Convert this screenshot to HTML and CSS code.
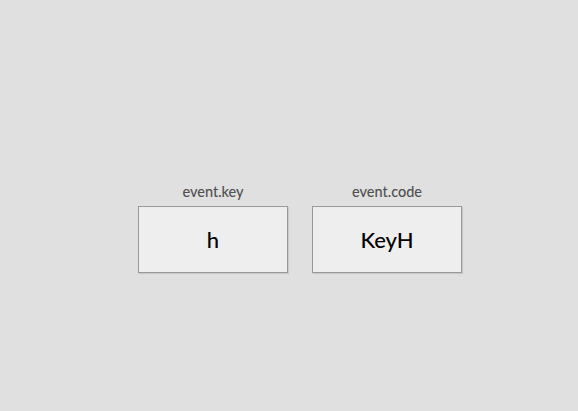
FILE: index.html
```html
<!DOCTYPE html>
<html>
<head>
<meta charset="utf-8">
<link rel="stylesheet" href="styles.css">
</head>
<body>
<main class="page">
  <div class="cards">
    <div class="card">
      <div class="label">event.key</div>
      <div class="box">h</div>
    </div>
    <div class="card">
      <div class="label">event.code</div>
      <div class="box">KeyH</div>
    </div>
  </div>
</main>
</body>
</html>
```
FILE: styles.css
```css
html, body {
  margin: 0;
  padding: 0;
  background: #e0e0e0;
  font-family: Lato, "Noto Sans", sans-serif;
}
.page {
  width: 578px;
  height: 411px;
  box-sizing: border-box;
  padding: 182px 0 0 138px;
}
.cards {
  display: flex;
  gap: 24px;
}
.card {
  display: flex;
  flex-direction: column;
  align-items: center;
  gap: 5px;
}
.label {
  font-size: 14.5px;
  line-height: 19px;
  font-weight: 500;
  color: #505050;
}
.box {
  box-sizing: border-box;
  width: 150px;
  height: 67px;
  border: 1px solid #999;
  background: #eee;
  box-shadow: 1px 1px 1px rgba(0,0,0,0.1);
  display: flex;
  align-items: center;
  justify-content: center;
  font-size: 22px;
  font-weight: 500;
  color: #000;
}
```
